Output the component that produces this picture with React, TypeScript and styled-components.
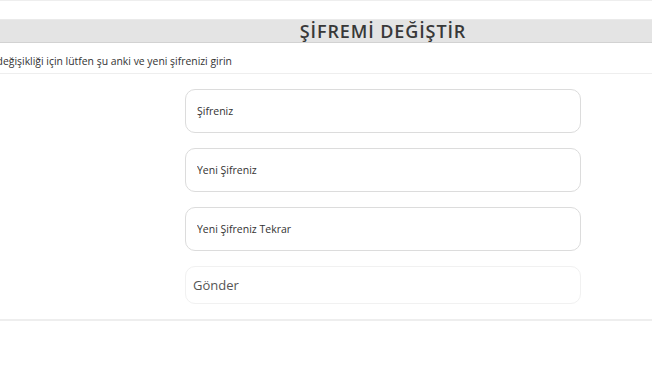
import { createGlobalStyle, styled } from "styled-components";

const GlobalStyle = createGlobalStyle`
  html, body {
    margin: 0;
    padding: 0;
    background: #fff;
    overflow: hidden;
  }
  body {
    font-family: "Open Sans", "Liberation Sans", sans-serif;
    color: #333;
  }
`;

const Page = styled.div`
  width: 652px;
  height: 371px;
  overflow: hidden;
  border-top: 1px solid #eee;
  box-sizing: border-box;
`;

// the page is wider than the window: its left edge sits off screen
const Content = styled.div`
  width: 846px;
  margin-left: -40px;
  padding-top: 18px;
`;

const TitleBar = styled.h1`
  margin: 0;
  height: 22px;
  background: #e4e4e4;
  border-top: 1px solid #eaeaea;
  border-bottom: 1px solid #d2d2d2;
  display: flex;
  align-items: center;
  justify-content: center;
  font-size: 18px;
  font-weight: 600;
  letter-spacing: 0.9px;
  color: #383838;
`;

const Hint = styled.p`
  margin: 0;
  padding: 11px 11px 0 12px;
  height: 31px;
  box-sizing: border-box;
  font-size: 10.4px;
  line-height: 14px;
  color: #333;
  border-bottom: 1px solid #eee;
`;

const Form = styled.form`
  width: 396px;
  margin: 15px auto 0;
  display: flex;
  flex-direction: column;
  gap: 15px;
  padding-bottom: 15px;
`;

const Field = styled.input`
  height: 44px;
  box-sizing: border-box;
  border: 1px solid #dcdcdc;
  border-radius: 10px;
  padding: 0 11px;
  font-family: inherit;
  font-size: 10.5px;
  color: #333;
  outline: none;
  &::placeholder {
    color: #333;
  }
`;

const Submit = styled.button`
  height: 38px;
  box-sizing: border-box;
  border: 1px solid #f1f1f1;
  border-radius: 10px;
  background: #fff;
  padding: 0 7px;
  text-align: left;
  font-family: inherit;
  font-size: 13px;
  color: #555;
`;

const Rule = styled.div`
  border-bottom: 2px solid #eee;
`;

export default function App() {
  return (
    <>
      <GlobalStyle />
      <Page>
        <Content>
          <TitleBar>ŞİFREMİ DEĞİŞTİR</TitleBar>
          <Hint>Şifre değişikliği için lütfen şu anki ve yeni şifrenizi girin</Hint>
          <Form onSubmit={(e) => e.preventDefault()}>
            <Field type="password" placeholder="Şifreniz" />
            <Field type="password" placeholder="Yeni Şifreniz" />
            <Field type="password" placeholder="Yeni Şifreniz Tekrar" />
            <Submit type="submit">Gönder</Submit>
          </Form>
          <Rule />
        </Content>
      </Page>
    </>
  );
}
